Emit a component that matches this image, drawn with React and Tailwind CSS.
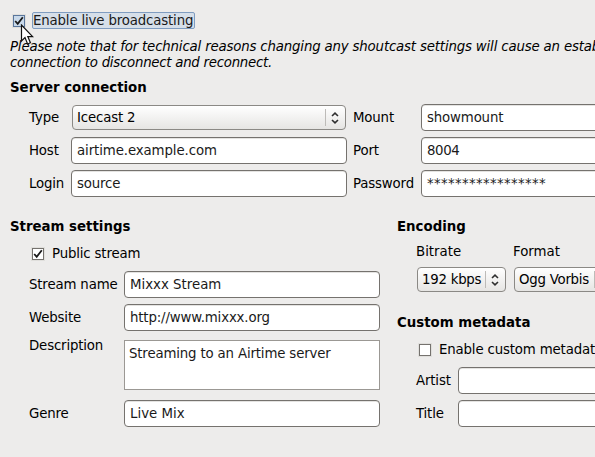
import React from 'react';

function Check({ checked, focused }) {
  return (
    <span
      className={`relative block h-3 w-3 shrink-0 border ${
        focused ? 'border-[#5a769c] bg-[#c9d9ea]' : 'border-[#75726e] bg-white'
      } shadow-[0_0_0_1px_#e0dfdc]`}
    >
      {checked && (
        <svg className="absolute -top-px -left-px" width="12" height="12" viewBox="0 0 12 12" fill="none">
          <path d="M2.2 6 L4.7 8.8 L9.8 2.2" stroke="#1a1a1a" strokeWidth="1.8" />
        </svg>
      )}
    </span>
  );
}

function Field({ children, className = '' }) {
  return (
    <div
      className={`h-[27px] shrink-0 rounded-[4px] border border-[#75726e] bg-white pt-[5px] pl-[5px] text-[#1a1a1a] shadow-[inset_0_1px_0_#e4e3e1] ${className}`}
    >
      {children}
    </div>
  );
}

function Select({ children, className = '' }) {
  return (
    <div
      className={`flex h-[25px] shrink-0 justify-between rounded-[4px] border border-[#8b8985] bg-linear-to-b from-white to-[#e6e5e3] pl-1 text-black ${className}`}
    >
      <span className="pt-1">{children}</span>
      <span className="mt-[3px] flex h-[17px] w-5 border-l border-[#bdbbb8]">
        <svg className="mt-[3px] ml-[5px]" width="8" height="12" viewBox="0 0 8 12" fill="none">
          <path d="M1 4 L4 1.2 L7 4 M1 8 L4 10.8 L7 8" stroke="#2e2e2e" strokeWidth="1.6" />
        </svg>
      </span>
    </div>
  );
}

function Row({ label, width, children }) {
  return (
    <div className="flex h-[27px]">
      <span className={`shrink-0 pt-[6px] ${width}`}>{label}</span>
      {children}
    </div>
  );
}

export default function App() {
  return (
    <div className="h-[457px] w-[595px] overflow-hidden bg-[#edeceb] font-['DejaVu_Sans',sans-serif] text-[13.333px] leading-4 tracking-[-0.16px] whitespace-nowrap text-black">
      <div className="w-[700px]">
        <div className="relative flex h-[38px] pt-3 pl-[13px]">
          <div className="pt-[3px]">
            <Check checked focused />
          </div>
          <span className="ml-[7px] h-[17px] w-[163px] rounded-[2px] border border-[#7f9cc0] bg-[#d6dfe9] text-[#1a1a1a]">
            Enable live broadcasting
          </span>
          <svg className="absolute top-6 left-5" width="15" height="24" viewBox="0 0 15 24">
            <path
              d="M1.5 1 V17 L5 13.6 L7.6 20 L10.4 18.8 L7.8 12.6 H12.6 Z"
              fill="#fff"
              stroke="#111"
              strokeWidth="1.2"
            />
          </svg>
        </div>
        <p className="mt-px pl-[10px] tracking-[-0.17px] italic">
          Please note that for technical reasons changing any shoutcast settings will cause an established
          <br />
          <span className="tracking-[-0.26px]">connection to disconnect and reconnect.</span>
        </p>

        <h2 className="mt-[9px] pl-[10px] font-bold tracking-normal">Server connection</h2>
        <div className="mt-2 flex pl-[29px]">
          <div className="flex w-[324px] flex-col gap-[6px]">
            <Row label="Type" width="w-[42px]">
              <Select className="mt-px ml-px w-[274px]">Icecast 2</Select>
            </Row>
            <Row label="Host" width="w-[42px]">
              <Field className="w-[276px] tracking-[-0.1px]">airtime.example.com</Field>
            </Row>
            <Row label="Login" width="w-[42px]">
              <Field className="w-[276px]">source</Field>
            </Row>
          </div>
          <div className="flex flex-col gap-[6px]">
            <Row label="Mount" width="w-[68px]">
              <Field className="w-[250px]">showmount</Field>
            </Row>
            <Row label="Port" width="w-[68px]">
              <Field className="w-[250px] tracking-[-0.4px]">8004</Field>
            </Row>
            <Row label="Password" width="w-[68px]">
              <Field className="w-[250px] tracking-[0.34px]">*****************</Field>
            </Row>
          </div>
        </div>

        <div className="mt-[22px] flex pl-[10px]">
          <section className="w-[387px]">
            <h2 className="font-bold tracking-normal">Stream settings</h2>
            <div className="mt-[11px] flex pl-[22px]">
              <div className="pt-[2px]">
                <Check checked />
              </div>
              <span className="ml-2">Public stream</span>
            </div>
            <div className="mt-[9px] flex flex-col gap-[6px] pl-[19px]">
              <Row label="Stream name" width="w-[95px]">
                <Field className="w-[256px] tracking-normal">Mixxx Stream</Field>
              </Row>
              <Row label="Website" width="w-[95px]">
                <Field className="w-[256px]">http://www.mixxx.org</Field>
              </Row>
            </div>
            <div className="mt-[9px] flex pl-[19px]">
              <span className="-mt-[2px] w-[95px]">Description</span>
              <div className="h-[50px] w-[256px] border border-[#9b9894] bg-white pt-[5px] pl-1 text-[#1a1a1a]">
                Streaming to an Airtime server
              </div>
            </div>
            <div className="mt-[10px] pl-[19px]">
              <Row label="Genre" width="w-[95px]">
                <Field className="w-[256px] tracking-normal">Live Mix</Field>
              </Row>
            </div>
          </section>

          <section>
            <h2 className="font-bold tracking-normal">Encoding</h2>
            <div className="mt-[9px] flex gap-2 pl-5">
              <div>
                <div className="-ml-px tracking-normal">Bitrate</div>
                <Select className="mt-[7px] w-[89px] tracking-[-0.25px]">192 kbps</Select>
              </div>
              <div>
                <div className="-ml-px tracking-normal">Format</div>
                <Select className="mt-[7px] w-[101px] tracking-[-0.25px]">Ogg Vorbis</Select>
              </div>
            </div>
            <h2 className="mt-[23px] font-bold tracking-normal">Custom metadata</h2>
            <div className="mt-[11px] flex pl-[22px]">
              <div className="pt-[2px]">
                <Check />
              </div>
              <span className="ml-2">Enable custom metadata</span>
            </div>
            <div className="mt-[9px] flex flex-col gap-[6px] pl-[19px]">
              <Row label="Artist" width="w-[42px]">
                <Field className="w-[220px]" />
              </Row>
              <Row label="Title" width="w-[42px]">
                <Field className="w-[220px]" />
              </Row>
            </div>
          </section>
        </div>
      </div>
    </div>
  );
}
